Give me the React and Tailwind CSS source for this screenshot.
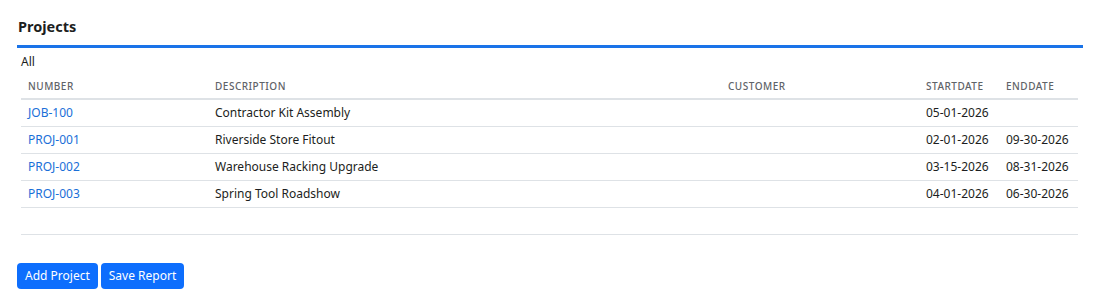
const rows = [
  { number: 'JOB-100', description: 'Contractor Kit Assembly', customer: '', start: '05-01-2026', end: '' },
  { number: 'PROJ-001', description: 'Riverside Store Fitout', customer: '', start: '02-01-2026', end: '09-30-2026' },
  { number: 'PROJ-002', description: 'Warehouse Racking Upgrade', customer: '', start: '03-15-2026', end: '08-31-2026' },
  { number: 'PROJ-003', description: 'Spring Tool Roadshow', customer: '', start: '04-01-2026', end: '06-30-2026' },
]

export default function App() {
  return (
    <div className="min-h-[308px] bg-white px-[17px] pt-[16px] text-[12px] text-[#1c1e21]" style={{ fontFamily: '"Noto Sans", "Open Sans", sans-serif' }}>
      <h1 className="text-[14.5px] font-bold leading-5 pl-[1px] pb-[9px]">Projects</h1>
      <div className="h-[3px] bg-[#1a73e8]" />
      <div className="pl-1 pr-[5px]">
        <div className="pt-[5px] leading-[18px]">All</div>
        <table className="w-full border-collapse table-fixed mt-[8px]">
          <colgroup>
            <col className="w-[187px]" />
            <col className="w-[513px]" />
            <col className="w-[198px]" />
            <col className="w-[80px]" />
            <col />
          </colgroup>
          <thead>
            <tr className="border-b-2 border-[#dee2e6] text-left text-[10px] tracking-[0.05em] text-[#5f6368] uppercase">
              <th className="pl-[7px] h-[20px] align-top font-medium">Number</th>
              <th className="pl-[7px] h-[20px] align-top font-medium">Description</th>
              <th className="pl-[7px] h-[20px] align-top font-medium">Customer</th>
              <th className="pl-[7px] h-[20px] align-top font-medium">StartDate</th>
              <th className="pl-[7px] h-[20px] align-top font-medium">EndDate</th>
            </tr>
          </thead>
          <tbody>
            {rows.map(r => (
              <tr key={r.number} className="border-b border-[#dee2e6]">
                <td className="pl-[7px] h-[27px]"><a href="#" className="text-[#1a6fd8]">{r.number}</a></td>
                <td className="pl-[7px]">{r.description}</td>
                <td className="pl-[7px]">{r.customer}</td>
                <td className="pl-[7px]">{r.start}</td>
                <td className="pl-[7px]">{r.end}</td>
              </tr>
            ))}
            <tr className="border-b border-[#dee2e6]">
              <td className="h-[27px]" colSpan={5} />
            </tr>
          </tbody>
        </table>
      </div>
      <div className="flex gap-[3px] mt-[28px]">
        <button className="h-[26px] px-2 rounded bg-[#0d6efd] text-white text-[12px]">Add Project</button>
        <button className="h-[26px] px-2 rounded bg-[#0d6efd] text-white text-[12px]">Save Report</button>
      </div>
    </div>
  )
}
